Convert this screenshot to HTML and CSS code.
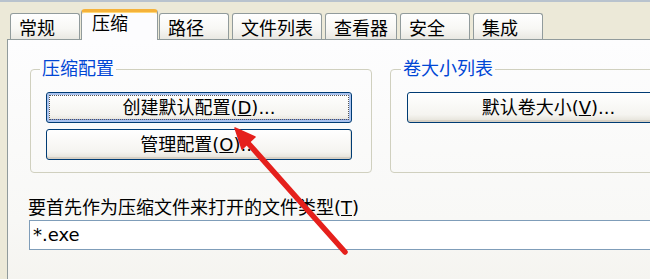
FILE: index.html
```html
<!DOCTYPE html>
<html lang="zh-CN">
<head>
<meta charset="utf-8">
<title>压缩</title>
<link rel="stylesheet" href="styles.css">
</head>
<body>
<div class="window">
  <div class="tabs">
    <div class="tab">常规</div>
    <div class="tab active">压缩</div>
    <div class="tab">路径</div>
    <div class="tab">文件列表</div>
    <div class="tab">查看器</div>
    <div class="tab">安全</div>
    <div class="tab">集成</div>
  </div>
  <div class="panel">
    <div class="groups">
      <fieldset class="group g1">
        <legend>压缩配置</legend>
        <button class="btn default">创建默认配置(<u>D</u>)...</button>
        <button class="btn">管理配置(<u>O</u>)...</button>
      </fieldset>
      <fieldset class="group g2">
        <legend>卷大小列表</legend>
        <button class="btn">默认卷大小(<u>V</u>)...</button>
      </fieldset>
    </div>
    <div class="field-label">要首先作为压缩文件来打开的文件类型(<u>T</u>)</div>
    <div class="input">*.exe</div>
  </div>
  <svg class="arrow" width="650" height="279" viewBox="0 0 650 279">
    <line x1="345" y1="252" x2="248" y2="143" stroke="#E5201C" stroke-width="5.5" stroke-linecap="round"/>
    <polygon points="235,128 255,137 242,149" fill="#E5201C" stroke="#E5201C" stroke-width="1.5" stroke-linejoin="round"/>
  </svg>
</div>
</body>
</html>
```

FILE: styles.css
```css
html, body {
  margin: 0;
  padding: 0;
  overflow: hidden;
  background: #ECE9D8;
}

.window {
  position: relative;
  width: 650px;
  height: 279px;
  overflow: hidden;
  border-top: 2px solid #B9C3CE;
  box-sizing: border-box;
  font-family: "DejaVu Sans", "Noto Sans CJK SC", sans-serif;
  font-size: 18px;
  color: #000;
}

.tabs {
  display: flex;
  align-items: flex-end;
  gap: 3px;
  padding: 7px 0 0 10px;
  margin-bottom: -1px;
}

.tab {
  box-sizing: border-box;
  min-width: 70px;
  height: 26px;
  margin-bottom: 1px;
  padding: 3px 8px 0 8px;
  line-height: 24px;
  border: 1px solid #919B9C;
  border-bottom: none;
  border-radius: 3px 3px 0 0;
  background: linear-gradient(#FFFFFF, #F7F7F4 60%, #E9E8E2);
  white-space: nowrap;
}

.tab.active {
  position: relative;
  z-index: 1;
  min-width: 77px;
  height: 31px;
  margin: 0 -2px;
  padding: 0 10px 4px 10px;
  line-height: 24px;
  border-top: 3px solid #F5B23A;
  border-radius: 4px 4px 0 0;
  background: #FCFCFE;
  box-shadow: inset 0 1px 0 #FFD77A;
}

.panel {
  box-sizing: border-box;
  width: 720px;
  height: 260px;
  margin-left: 7px;
  padding: 19px 0 0 20px;
  border: 1px solid #919B9C;
  background: linear-gradient(#FDFDFE, #F8F8F6 70%, #F4F3EE);
}

.groups {
  display: flex;
  gap: 18px;
  margin-left: 2px;
}

.group {
  box-sizing: border-box;
  margin: 0;
  min-width: 0;
  padding: 0 19px 12px 15px;
  border: 1px solid #D0D0BF;
  border-radius: 4px;
  display: flex;
  flex-direction: column;
  gap: 6px;
}

.g1 { width: 342px; }
.g2 { width: 320px; padding-left: 16px; }

.group legend {
  margin-left: -6px;
  padding: 0 2px;
  line-height: 20px;
  color: #0046D5;
}

.btn {
  display: block;
  box-sizing: border-box;
  width: 100%;
  height: 31px;
  margin: 0;
  padding: 0;
  font-family: "DejaVu Sans", "Noto Sans CJK SC", sans-serif;
  font-size: 18px;
  line-height: 28px;
  color: #000;
  text-align: center;
  border: 1px solid #003C74;
  border-radius: 3px;
  background: linear-gradient(#FFFFFF, #F5F4F0 75%, #E3E0D6);
  box-shadow: inset 0 -2px 0 #D6D0C5, inset -1px 0 0 #E2DFD6;
}

.group legend + .btn { margin-top: 13px; }

.btn.default {
  box-shadow: inset 0 0 0 2px #A9C2EE, inset 0 -3px 0 #7F9DEA;
  outline: 1px dotted #555;
  outline-offset: -4px;
}

.field-label {
  margin-top: 25px;
  line-height: 20px;
  white-space: nowrap;
}

.input {
  box-sizing: border-box;
  width: 700px;
  height: 30px;
  margin: 2px 0 0 1px;
  padding-left: 3px;
  line-height: 28px;
  border: 1px solid #7F9DB9;
  background: #FFFFFF;
}

.arrow {
  position: absolute;
  left: 0;
  top: -2px;
  pointer-events: none;
}
```
